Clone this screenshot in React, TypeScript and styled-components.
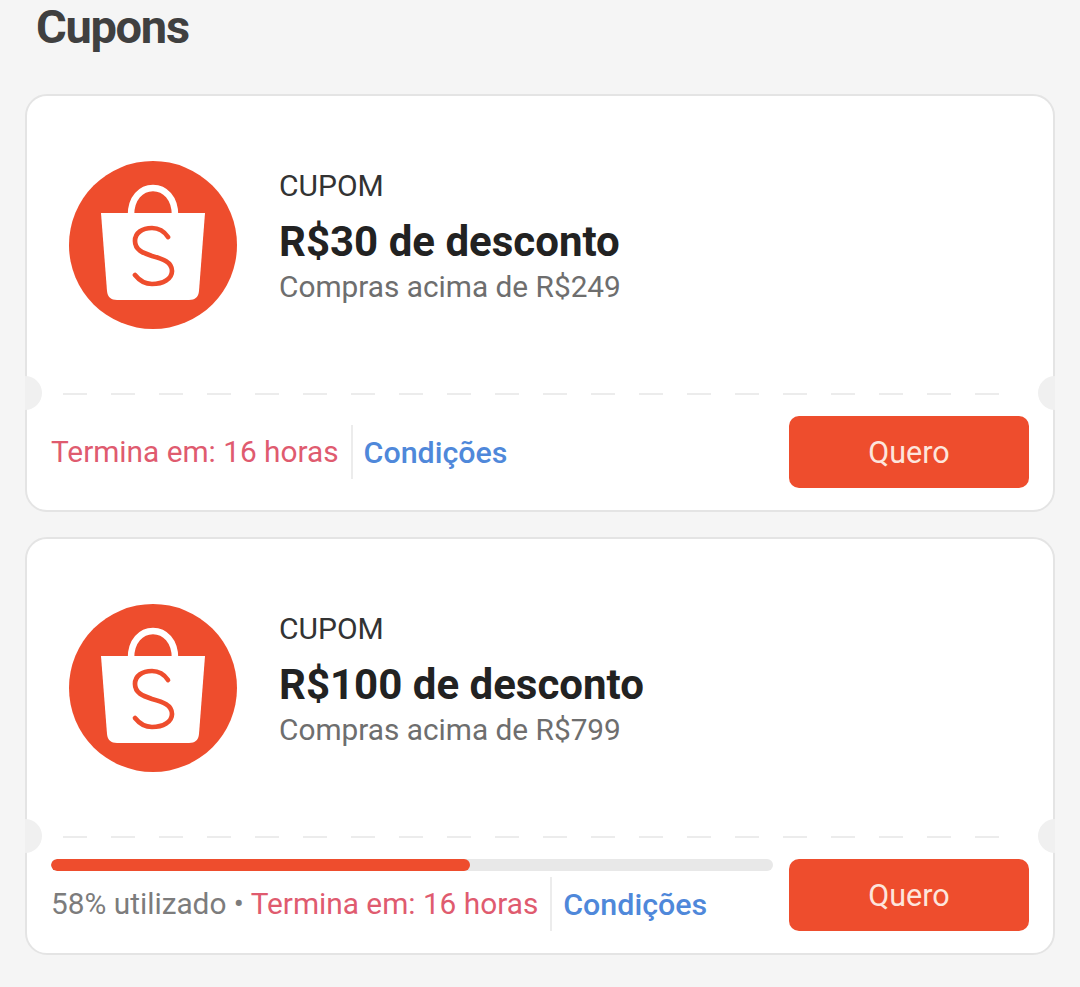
import styled, { createGlobalStyle } from 'styled-components';

const GlobalStyle = createGlobalStyle`
  html, body {
    margin: 0;
    padding: 0;
    background-color: #f5f5f5;
  }

  body {
    font-family: Roboto, "Liberation Sans", sans-serif;
  }
`

const ShopeeLogo = () => (
  <LogoSvg viewBox="0 0 176 176">
    <circle cx="88" cy="88" r="84" fill="#ee4d2d" />
    <path
      d="M66 58 C66 41 76 31 88 31 C100 31 110 41 110 58"
      fill="none"
      stroke="#fff"
      strokeWidth="6.500"
    />
    <path
      d="M36 56 H140 L134 134 C133.500 140 130 143 124 143 H52 C46 143 42.500 140 42 134 Z"
      fill="#fff"
    />
    <path
      d="M103 80 C99 74 93 71 87 71 C77 71 70 76 70 84 C70 93 78 96 87 99 C98 102 107 105 107 114 C107 122 98 127 87 127 C80 127 74 123 70 118"
      fill="none"
      stroke="#ee4d2d"
      strokeWidth="4.700"
      strokeLinecap="round"
    />
  </LogoSvg>
)

interface CouponType {
  value: string,
  minimum: string,
  used?: number,
}

const Coupon = ({ value, minimum, used }: CouponType) => (
  <CouponCard>
    <CouponTop>
      <ShopeeLogo />
      <CouponInfo>
        <CouponLabel>CUPOM</CouponLabel>
        <CouponValue>{value}</CouponValue>
        <CouponMinimum>{minimum}</CouponMinimum>
      </CouponInfo>
    </CouponTop>

    <Divider>
      <Notch side="left" />
      <Notch side="right" />
    </Divider>

    <CouponBottom>
      <CouponMeta>
        {used !== undefined && (
          <ProgressTrack>
            <ProgressFill style={{ width: `${used}%` }} />
          </ProgressTrack>
        )}
        <MetaRow>
          <MetaText>
            {used !== undefined && <UsedText>{used}% utilizado • </UsedText>}
            <EndsText>Termina em: 16 horas</EndsText>
          </MetaText>
          <ConditionsLink>Condições</ConditionsLink>
        </MetaRow>
      </CouponMeta>
      <ClaimButton>Quero</ClaimButton>
    </CouponBottom>
  </CouponCard>
)

export default function App() {
  return (
    <Page>
      <GlobalStyle />
      <PageTitle>Cupons</PageTitle>
      <CouponList>
        <Coupon value="R$30 de desconto" minimum="Compras acima de R$249" />
        <Coupon value="R$100 de desconto" minimum="Compras acima de R$799" used={58} />
      </CouponList>
    </Page>
  )
}

const Page = styled.div`
  width: 1080px;
  height: 987px;
  padding: 0 25px;
  box-sizing: border-box;
  overflow: hidden;
  background-color: #f5f5f5;
`

const PageTitle = styled.h1`
  height: 94px;
  margin: 0;
  padding: 2px 0 0 11px;
  box-sizing: border-box;
  font-size: 47px;
  font-weight: 700;
  line-height: 50px;
  letter-spacing: -1.3px;
  color: #404040;
`

const CouponList = styled.div`
  display: flex;
  flex-direction: column;
  gap: 25px;
`

const CouponCard = styled.div`
  width: 1030px;
  height: 418px;
  box-sizing: border-box;
  display: flex;
  flex-direction: column;
  background-color: #fff;
  border: 2px solid #e4e4e4;
  border-radius: 22px;
`

const CouponTop = styled.div`
  height: 297px;
  display: flex;
  align-items: center;
  gap: 38px;
  padding-left: 38px;
`

const LogoSvg = styled.svg`
  width: 176px;
  height: 176px;
  flex-shrink: 0;
`

const CouponInfo = styled.div`
  display: flex;
  flex-direction: column;
  padding-bottom: 16px;
`

const CouponLabel = styled.span`
  font-size: 30px;
  line-height: 36px;
  color: #333;
`

const CouponValue = styled.span`
  margin-top: 14px;
  font-size: 42px;
  font-weight: 700;
  line-height: 48px;
  color: #222;
`

const CouponMinimum = styled.span`
  margin-top: 3px;
  font-size: 29.8px;
  line-height: 36px;
  color: #6e6e6e;
`

const Divider = styled.div`
  position: relative;
  height: 2px;
  background-image: repeating-linear-gradient(
    to right,
    #ececec 0,
    #ececec 24px,
    transparent 24px,
    transparent 48px
  );
  background-size: 936px 2px;
  background-position: 36px 0;
  background-repeat: no-repeat;
`

const Notch = styled.div<{ side: 'left' | 'right' }>`
  position: absolute;
  top: -17px;
  ${({ side }) => side}: -2px;
  width: 17px;
  height: 34px;
  box-sizing: border-box;
  background-color: #f0f0f0;
  border-radius: ${({ side }) => (side === 'left' ? '0 17px 17px 0' : '17px 0 0 17px')};
`

const CouponBottom = styled.div`
  flex: 1;
  display: flex;
  justify-content: space-between;
  align-items: flex-start;
  padding: 21px 24px 0 24px;
`

const CouponMeta = styled.div`
  flex: 1;
  display: flex;
  flex-direction: column;
  justify-content: center;
  height: 72px;
  margin-right: 16px;
`

const ProgressTrack = styled.div`
  height: 12px;
  margin-bottom: 6px;
  border-radius: 6px;
  background-color: #e8e8e8;
  overflow: hidden;
`

const ProgressFill = styled.div`
  height: 100%;
  border-radius: 6px;
  background-color: #ee4d2d;
`

const MetaRow = styled.div`
  display: flex;
  align-items: center;
  height: 54px;
  font-size: 29.8px;
  white-space: nowrap;
`

const MetaText = styled.span`
  padding-right: 12px;
  height: 54px;
  line-height: 54px;
  border-right: 2px solid #ececec;
`

const UsedText = styled.span`
  color: #7c7c7c;
`

const EndsText = styled.span`
  color: #df5b6f;
`

const ConditionsLink = styled.span`
  margin-left: 11px;
  font-size: 30.4px;
  font-weight: 500;
  color: #4f88da;
`

const ClaimButton = styled.button`
  width: 240px;
  height: 72px;
  flex-shrink: 0;
  border: none;
  border-radius: 10px;
  background-color: #ee4d2d;
  font-family: inherit;
  font-size: 30.5px;
  color: #fde5dc;
`
